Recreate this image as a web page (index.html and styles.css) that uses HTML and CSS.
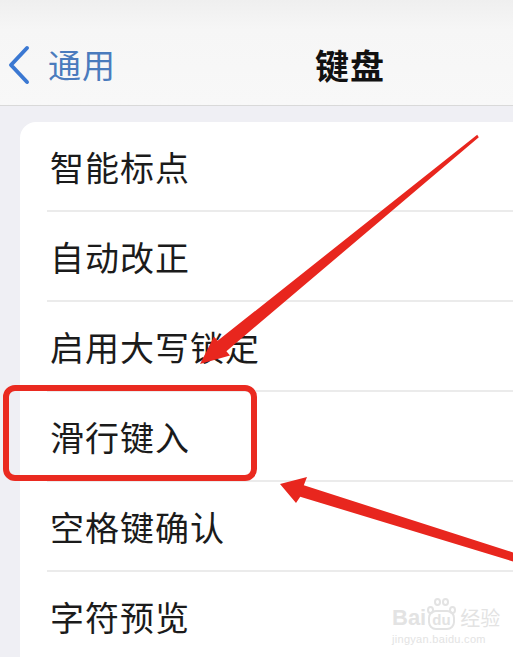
FILE: index.html
```html
<!DOCTYPE html>
<html lang="zh-CN">
<head>
<meta charset="utf-8">
<title>键盘</title>
<link rel="stylesheet" href="styles.css">
</head>
<body>
<div class="screen">
  <header class="nav">
    <div class="back">
      <svg class="chev" width="26" height="40" viewBox="0 0 26 40"><polyline points="21,3 5,20 21,37" fill="none" stroke="#3b78d2" stroke-width="4" stroke-linecap="round" stroke-linejoin="round"/></svg>
      <span class="back-label">通用</span>
    </div>
    <div class="title">键盘</div>
  </header>
  <main class="content">
    <section class="card">
      <div class="row">智能标点</div>
      <div class="sep"></div>
      <div class="row">自动改正</div>
      <div class="sep"></div>
      <div class="row">启用大写锁定</div>
      <div class="sep"></div>
      <div class="row">滑行键入</div>
      <div class="sep"></div>
      <div class="row">空格键确认</div>
      <div class="sep"></div>
      <div class="row">字符预览</div>
    </section>
  </main>
  <svg class="marks" width="513" height="657" viewBox="0 0 513 657">
    <rect x="6" y="388" width="248" height="90" rx="9" ry="9" fill="none" stroke="#ea2a20" stroke-width="6"/>
    <polygon fill="#e8261e" points="477.2,134.8 217.6,340.8 214,336.5 200,364 230,355.5 226.4,351.2 478.8,137.2"/>
    <polygon fill="#e8261e" points="521,555 303.8,485.3 307,477 280,484 296,503 300.2,496.7 518,563"/>
  </svg>
  <div class="wm">
    <div class="wm-top"><span class="wm-bai">Bai</span><span class="paw"><i></i><i></i><i></i><i></i><b>du</b></span><span class="wm-jy">经验</span></div>
    <div class="wm-url">jingyan.baidu.com</div>
  </div>
</div>
</body>
</html>
```
FILE: styles.css
```css
* { box-sizing: border-box; }
html, body { margin: 0; padding: 0; }
body {
  width: 513px;
  height: 657px;
  overflow: hidden;
  background: #efeff4;
  font-family: "Noto Sans CJK SC", "Noto Sans", sans-serif;
}
.screen {
  position: relative;
  width: 513px;
  height: 657px;
  overflow: hidden;
}
.nav {
  height: 106px;
  background: linear-gradient(#efefef 0px, #f6f6f6 30px, #f8f8f8 100%);
  border-bottom: 1px solid #d9d9d9;
  display: flex;
  align-items: center;
  padding-top: 24px;
  position: relative;
}
.back {
  display: flex;
  align-items: center;
  padding-left: 6px;
  gap: 16px;
}
.chev { display: block; }
.back-label {
  font-size: 33px;
  color: #4a7bbd;
  line-height: 1;
  letter-spacing: 1px;
}
.title {
  margin-left: 199px;
  font-size: 34px;
  font-weight: 700;
  color: #111;
  line-height: 1;
  letter-spacing: 1px;
}
.content {
  padding-top: 16px;
  padding-left: 20px;
}
.card {
  width: 520px;
  background: #fff;
  border-top-left-radius: 16px;
}
.row {
  height: 88px;
  display: flex;
  align-items: center;
  padding-left: 30px;
  font-size: 34px;
  color: #1b1b1b;
  letter-spacing: 1px;
}
.sep {
  height: 2px;
  margin-left: 27px;
  background: #ebebeb;
}
.marks {
  position: absolute;
  left: 0;
  top: 0;
}
.wm {
  position: absolute;
  left: 392px;
  top: 604px;
  color: #e3e3e3;
  font-family: "Liberation Sans", sans-serif;
}
.wm-top {
  display: flex;
  align-items: flex-end;
  font-size: 22px;
  line-height: 24px;
  font-weight: 700;
}
.paw {
  position: relative;
  width: 30px;
  height: 26px;
  display: inline-block;
}
.paw i {
  position: absolute;
  width: 7px;
  height: 8px;
  border: 2px solid #e3e3e3;
  border-radius: 50%;
}
.paw i:nth-child(1) { left: 1px; top: 2px; }
.paw i:nth-child(2) { left: 8px; top: -6px; }
.paw i:nth-child(3) { left: 16px; top: -6px; }
.paw i:nth-child(4) { left: 23px; top: 2px; }
.paw b {
  position: absolute;
  left: 2px;
  bottom: 0;
  font-size: 15px;
  line-height: 16px;
  border: 2px solid #e3e3e3;
  border-radius: 8px;
  padding: 0 2px;
}
.wm-jy {
  font-family: "Noto Sans CJK SC", sans-serif;
  font-size: 20px;
  margin-left: 4px;
  font-weight: 400;
}
.wm-url {
  font-size: 11px;
  line-height: 14px;
  margin-top: 2px;
  letter-spacing: 0.3px;
}
```
